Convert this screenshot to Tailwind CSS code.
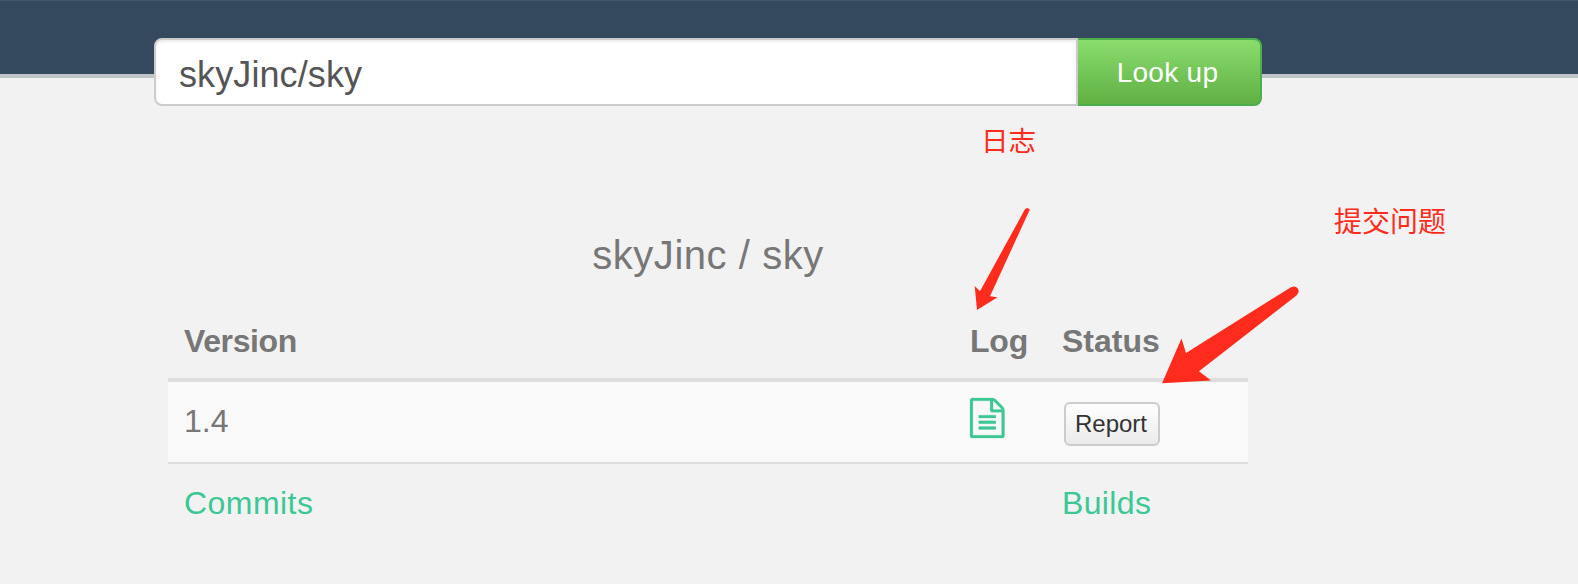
<!DOCTYPE html>
<html lang="en">
<head>
<meta charset="utf-8">
<title>skyJinc / sky</title>
<script src="https://cdn.jsdelivr.net/npm/@tailwindcss/browser@4"></script>
</head>
<body class="relative h-[584px] w-[1578px] overflow-hidden bg-[#f2f2f2] font-['Liberation_Sans',Arial,sans-serif] text-[#777777]">
<header class="h-[78px] border-t border-b-4 border-t-[#3f566d] border-b-[#bdc3c7] bg-[#34495e] pt-[37px] pl-[154px]">
  <form class="flex h-[68px] w-[1108px]">
    <input type="text" value="skyJinc/sky" aria-label="Repository" class="h-full w-[924px] rounded-l-lg border-2 border-[#cccccc] bg-white px-[23px] pt-[5px] text-[36px] tracking-[0.1px] text-[#555555] shadow-[inset_0_2px_3px_rgba(0,0,0,0.08)] outline-none">
    <button type="button" class="h-full w-[184px] rounded-r-lg border-2 border-l-0 border-[#4cae4c] bg-linear-to-b from-[#8add6d] to-[#60b044] pt-[2px] pr-[3px] text-[28px] tracking-[0.3px] text-white">Look up</button>
  </form>
</header>
<main class="ml-[168px] w-[1080px] pt-[146px]">
  <h1 class="h-[60px] text-center text-[40px] leading-[62px] tracking-[0.55px]">skyJinc / sky</h1>
  <section class="mt-[17px] text-[32px]">
    <div class="grid h-[81px] grid-cols-[786px_92px_202px] border-b-4 border-[#dddddd] font-bold leading-[80px]">
      <span class="pl-4 tracking-[-0.4px]">Version</span>
      <span class="pl-4 tracking-[-0.2px]">Log</span>
      <span class="pl-4">Status</span>
    </div>
    <div class="grid h-[82px] grid-cols-[786px_92px_202px] border-b-2 border-[#dddddd] bg-[#f9f9f9]">
      <span class="pl-4 leading-[78px]">1.4</span>
      <a class="pt-[16px] pl-4 text-[#3dc795]" aria-label="Log">
        <svg class="h-[40px] w-[34.5px] overflow-visible" viewBox="0 0 1536 1792" preserveAspectRatio="none" fill="currentColor" stroke="currentColor" stroke-width="10"><path d="M1468 380q28 28 48 76t20 88v1152q0 40-28 68t-68 28H96q-40 0-68-28t-28-68V96q0-40 28-68T96 0h896q40 0 88 20t76 48zm-444-244v376h376q-10-29-22-41l-313-313q-12-12-41-22zm384 1528V640H992q-40 0-68-28t-28-68V128H128v1536zM384 800q0-14 9-23t23-9h704q14 0 23 9t9 23v64q0 14-9 23t-23 9H416q-14 0-23-9t-9-23zm736 224q14 0 23 9t9 23v64q0 14-9 23t-23 9H416q-14 0-23-9t-9-23v-64q0-14 9-23t23-9zm0 256q14 0 23 9t9 23v64q0 14-9 23t-23 9H416q-14 0-23-9t-9-23v-64q0-14 9-23t23-9z"/></svg>
      </a>
      <div class="flex pt-5 pl-[18px]">
        <button type="button" class="h-[44px] w-[96px] rounded-md border-2 border-[#cccccc] bg-linear-to-b from-white to-[#ebebeb] pr-[2px] text-[24px] leading-[40px] text-[#333333]">Report</button>
      </div>
    </div>
    <div class="grid h-[78px] grid-cols-[878px_202px] leading-[79px] text-[#3dc795]">
      <a class="pl-4 tracking-[0.45px]">Commits</a>
      <a class="pl-4 tracking-[0.35px]">Builds</a>
    </div>
  </section>
</main>
<!-- Annotations laid over the page -->
<div class="pointer-events-none absolute inset-0 font-['Noto_Sans_CJK_SC',sans-serif] text-[27.5px] leading-[40px] text-[#ff2b1c]">
  <span class="absolute top-[119px] left-[981px] whitespace-nowrap">日志</span>
  <span class="absolute top-[200px] left-[1334px] text-[28px] whitespace-nowrap">提交问题</span>
  <svg class="absolute inset-0 h-[584px] w-[1578px]" viewBox="0 0 1578 584" fill="currentColor">
    <path d="M977 310L974.7 286L980 291.2L1024.8 209.6Q1026.5 207.3 1028.5 208.5T1029 211.3L990 296.3L997.5 297.3Z"/>
    <path d="M1162 383.3L1181.5 338.5L1186 353L1288.5 288.7Q1294.5 284.8 1297.6 288.2Q1300.2 291.8 1296.5 295.5L1199 371.3L1211 380.6Z"/>
  </svg>
</div>
</body>
</html>
